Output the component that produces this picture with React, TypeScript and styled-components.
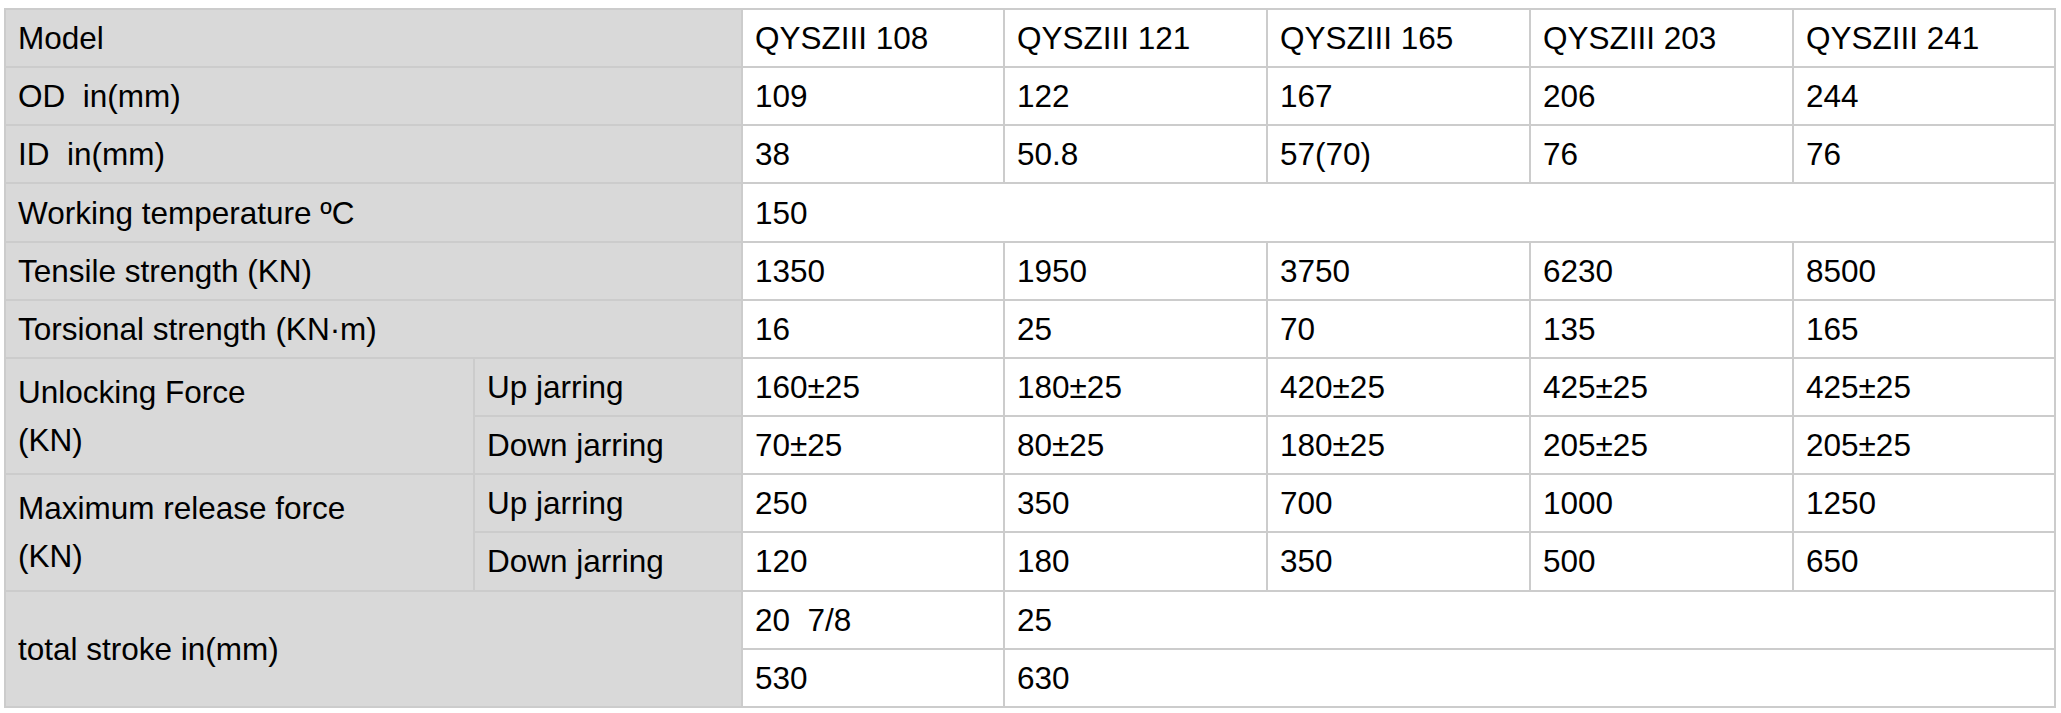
import React from 'react';
import styled, { createGlobalStyle } from 'styled-components';

const GlobalStyle = createGlobalStyle`
  body {
    margin: 0;
    background: #ffffff;
  }
`;

const Page = styled.div`
  padding: 8px 7px 5px 4px;
`;

const Table = styled.table`
  width: 2050px;
  height: 700px;
  table-layout: fixed;
  border-collapse: collapse;
  font-family: 'Liberation Sans', Arial, sans-serif;
  font-size: 31.5px;
  line-height: 48px;
  color: #000;
`;

const Cell = styled.td<{ $label?: boolean }>`
  height: 56px;
  padding: 0 12px;
  border: 2px solid #cccccc;
  background: ${(p) => (p.$label ? '#d9d9d9' : '#ffffff')};
  vertical-align: middle;
  text-align: left;
  white-space: pre;
`;

const models = ['QYSZIII 108', 'QYSZIII 121', 'QYSZIII 165', 'QYSZIII 203', 'QYSZIII 241'];

type SimpleRow = { label: string; values: string[] };

const simpleRows: SimpleRow[] = [
  { label: 'OD  in(mm)', values: ['109', '122', '167', '206', '244'] },
  { label: 'ID  in(mm)', values: ['38', '50.8', '57(70)', '76', '76'] },
];

const strengthRows: SimpleRow[] = [
  { label: 'Tensile strength (KN)', values: ['1350', '1950', '3750', '6230', '8500'] },
  { label: 'Torsional strength (KN·m)', values: ['16', '25', '70', '135', '165'] },
];

type ForceGroup = { title: string; up: string[]; down: string[] };

const forces: ForceGroup[] = [
  {
    title: 'Unlocking Force',
    up: ['160±25', '180±25', '420±25', '425±25', '425±25'],
    down: ['70±25', '80±25', '180±25', '205±25', '205±25'],
  },
  {
    title: 'Maximum release force',
    up: ['250', '350', '700', '1000', '1250'],
    down: ['120', '180', '350', '500', '650'],
  },
];

const Values: React.FC<{ values: string[] }> = ({ values }) => (
  <>
    {values.map((v, i) => (
      <Cell key={i}>{v}</Cell>
    ))}
  </>
);

const App: React.FC = () => (
  <Page>
    <GlobalStyle />
    <Table>
      <colgroup>
        <col style={{ width: 469 }} />
        <col style={{ width: 268 }} />
        <col style={{ width: 262 }} />
        <col style={{ width: 263 }} />
        <col style={{ width: 263 }} />
        <col style={{ width: 263 }} />
        <col style={{ width: 262 }} />
      </colgroup>
      <tbody>
        <tr>
          <Cell $label colSpan={2}>Model</Cell>
          <Values values={models} />
        </tr>
        {simpleRows.map((r) => (
          <tr key={r.label}>
            <Cell $label colSpan={2}>{r.label}</Cell>
            <Values values={r.values} />
          </tr>
        ))}
        <tr>
          <Cell $label colSpan={2}>Working temperature ºC</Cell>
          <Cell colSpan={5}>150</Cell>
        </tr>
        {strengthRows.map((r) => (
          <tr key={r.label}>
            <Cell $label colSpan={2}>{r.label}</Cell>
            <Values values={r.values} />
          </tr>
        ))}
        {forces.map((f) => (
          <React.Fragment key={f.title}>
            <tr>
              <Cell $label rowSpan={2}>
                {f.title}
                <br />
                (KN)
              </Cell>
              <Cell $label>Up jarring</Cell>
              <Values values={f.up} />
            </tr>
            <tr>
              <Cell $label>Down jarring</Cell>
              <Values values={f.down} />
            </tr>
          </React.Fragment>
        ))}
        <tr>
          <Cell $label colSpan={2} rowSpan={2}>total stroke in(mm)</Cell>
          <Cell>20  7/8</Cell>
          <Cell colSpan={4}>25</Cell>
        </tr>
        <tr>
          <Cell>530</Cell>
          <Cell colSpan={4}>630</Cell>
        </tr>
      </tbody>
    </Table>
  </Page>
);

export default App;
